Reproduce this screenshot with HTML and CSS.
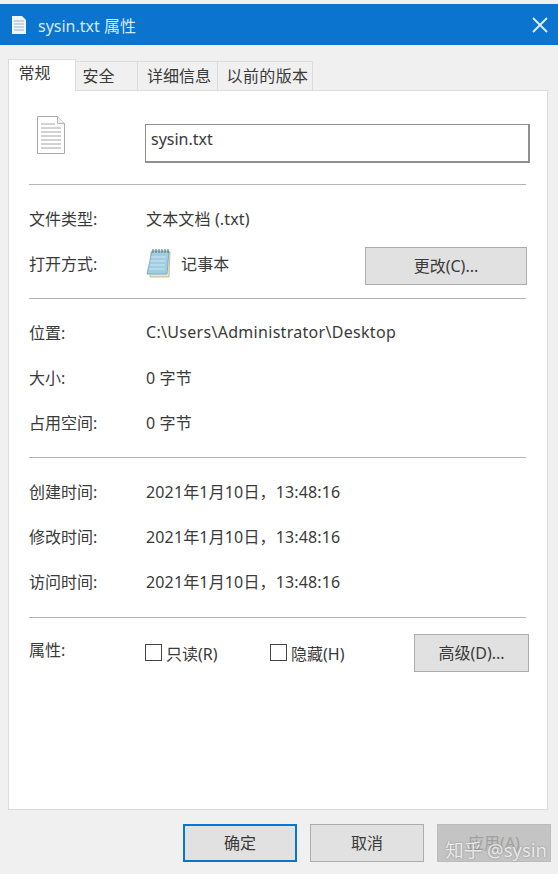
FILE: index.html
```html
<!DOCTYPE html>
<html lang="en">
<head>
    <meta charset="UTF-8">
    <meta name="viewport" content="width=device-width, initial-scale=1.0">
    <title>sysin.txt 属性</title>
    <link rel="stylesheet" href="styles.css">
</head>
<body>
    <div class="window">
        <div class="titlebar">
            <svg class="title-icon" width="16" height="20" viewBox="0 0 16 20">
                <path d="M1 1h10l4 4v14H1z" fill="#eef5fb"/>
                <path d="M3 6h10M3 9h10M3 12h10M3 15h10" stroke="#9fb4c6" stroke-width="1"/>
            </svg>
            <span class="title-text">sysin.txt 属性</span>
            <svg class="title-close" width="16" height="16" viewBox="0 0 16 16">
                <path d="M1 1l14 14M15 1L1 15" stroke="#e3f0fa" stroke-width="1.8" fill="none"/>
            </svg>
        </div>

        <div class="tabs">
            <div class="tab tab-active">常规</div>
            <div class="tab tab-safe">安全</div>
            <div class="tab tab-detail">详细信息</div>
            <div class="tab tab-old">以前的版本</div>
        </div>

        <div class="panel">
            <div class="file-head">
                <svg class="file-icon" width="30" height="40" viewBox="0 0 30 40">
                    <path d="M1.5 1.5h20l7 7v30h-27z" fill="#fff" stroke="#a9a9a9"/>
                    <path d="M21.5 1.5v7h7" fill="#eee" stroke="#b5b5b5"/>
                    <path d="M5 9h14M5 13h20M5 17h20M5 21h20M5 25h20M5 29h20M5 33h20" stroke="#a6a6a6" stroke-width="1"/>
                </svg>
                <div class="name-box">sysin.txt</div>
            </div>

            <div class="section">
                <div class="row">
                    <div class="label">文件类型:</div>
                    <div class="value">文本文档 (.txt)</div>
                </div>
                <div class="row">
                    <div class="label">打开方式:</div>
                    <div class="value opens">
                        <svg class="note-icon" width="26" height="30" viewBox="0 0 26 30">
                            <path d="M5 4h19l-1 25H4z" fill="#e9e2cf" stroke="#b9ae92" stroke-width="0.8"/>
                            <path d="M6 3h17l-2 23H1z" fill="#9fcde2" stroke="#6fa6c0" stroke-width="0.8"/>
                            <path d="M5 9h15M4.500 13h15M4 17h15M3.500 21h15" stroke="#cfe6f0" stroke-width="1"/>
                            <path d="M7 1v4M10 1v4M13 1v4M16 1v4M19 1v4M22 1v4" stroke="#5f7079" stroke-width="1"/>
                        </svg>
                        <span>记事本</span>
                    </div>
                    <div class="btn btn-change">更改(C)...</div>
                </div>
            </div>

            <div class="section">
                <div class="row">
                    <div class="label">位置:</div>
                    <div class="value path">C:\Users\Administrator\Desktop</div>
                </div>
                <div class="row">
                    <div class="label">大小:</div>
                    <div class="value">0 字节</div>
                </div>
                <div class="row">
                    <div class="label">占用空间:</div>
                    <div class="value">0 字节</div>
                </div>
            </div>

            <div class="section">
                <div class="row">
                    <div class="label">创建时间:</div>
                    <div class="value">2021年1月10日，13:48:16</div>
                </div>
                <div class="row">
                    <div class="label">修改时间:</div>
                    <div class="value">2021年1月10日，13:48:16</div>
                </div>
                <div class="row">
                    <div class="label">访问时间:</div>
                    <div class="value">2021年1月10日，13:48:16</div>
                </div>
            </div>

            <div class="attrs">
                <div class="label attr-label">属性:</div>
                <label class="check check-read"><span class="box"></span>只读(R)</label>
                <label class="check check-hide"><span class="box"></span>隐藏(H)</label>
                <div class="btn btn-adv">高级(D)...</div>
            </div>
        </div>

        <div class="footer">
            <div class="btn btn-foot btn-ok">确定</div>
            <div class="btn btn-foot">取消</div>
            <div class="btn btn-foot btn-off">应用(A)</div>
        </div>

        <!-- watermark sits on top of the apply button -->
        <div class="watermark">知乎 @sysin</div>
    </div>
</body>
</html>
```

FILE: styles.css
```css
/* General styles */
html, body {
    margin: 0;
    padding: 0;
}

body {
    width: 558px;
    height: 874px;
    overflow: hidden;
    background: #f3f3f3;
    font-family: "Noto Sans", "Noto Sans CJK SC", sans-serif;
    font-size: 16px;
    color: #3a3a3a;
}

.window {
    position: relative;
    height: 870px;
    padding-top: 4px;
    background: #f0f0f0;
}

/* Title bar */
.titlebar {
    display: flex;
    align-items: center;
    height: 41px;
    padding: 0 10px 0 11px;
    background: #0a74cf;
    color: #d6e8f7;
}

.title-icon {
    margin-right: 11px;
}

.title-text {
    flex: 1;
}

/* Tabs */
.tabs {
    display: flex;
    align-items: flex-end;
    height: 45px;
    padding-left: 8px;
}

.tab {
    box-sizing: border-box;
    height: 29px;
    line-height: 28px;
    text-align: center;
    background: #f0f0f0;
    border: 1px solid #dcdcdc;
    border-bottom: none;
    border-left: none;
}

.tab-active {
    position: relative;
    z-index: 1;
    width: 68px;
    height: 32px;
    margin-bottom: -1px;
    padding-right: 15px;
    line-height: 26px;
    background: #fff;
    border-left: 1px solid #dcdcdc;
}

.tab-safe {
    width: 62px;
    padding-right: 16px;
}

.tab-detail {
    width: 80px;
    padding-left: 3px;
}

.tab-old {
    width: 95px;
    padding-left: 5px;
    letter-spacing: 0.400px;
}

/* Main panel */
.panel {
    box-sizing: border-box;
    width: 540px;
    height: 720px;
    margin-left: 8px;
    padding: 0 21px 0 20px;
    background: #fff;
    border: 1px solid #dcdcdc;
}

.file-head {
    display: flex;
    align-items: flex-start;
    height: 93px;
}

.file-icon {
    flex-shrink: 0;
    margin: 24px 0 0 7px;
}

.name-box {
    box-sizing: border-box;
    flex-shrink: 0;
    width: 385px;
    height: 39px;
    margin: 33px 0 0 79px;
    padding: 3px 5px 0;
    background: #fff;
    border: 2px solid #8f8f8f;
    border-width: 1px 2px 2px 1px;
}

.section {
    padding: 10px 0 12.500px;
    border-top: 1px solid #b4b4b4;
}

.row {
    display: flex;
    align-items: center;
    height: 45.250px;
}

.label {
    width: 116px;
    flex-shrink: 0;
}

.value {
    flex: 1;
    padding-left: 1px;
    letter-spacing: 0.150px;
}

.path {
    letter-spacing: 0.300px;
}

.opens {
    display: flex;
    align-items: center;
}

.note-icon {
    margin-right: 9px;
}

/* Buttons */
.btn {
    box-sizing: border-box;
    height: 38px;
    line-height: 36px;
    text-align: center;
    background: #e1e1e1;
    border: 1px solid #adadad;
}

.btn-change {
    width: 162px;
    margin: 6px -1px 0 0;
}

/* Attributes row */
.attrs {
    display: flex;
    align-items: center;
    height: 72px;
    border-top: 1px solid #b4b4b4;
}

.attr-label {
    margin-top: -9px;
}

.check {
    display: flex;
    align-items: center;
    margin-top: -2px;
}

.check-read {
    width: 125px;
}

.check-hide {
    width: 144px;
}

.box {
    box-sizing: border-box;
    width: 17px;
    height: 17px;
    margin-right: 4px;
    background: #fff;
    border: 1px solid #444;
}

.btn-adv {
    width: 115px;
    flex-shrink: 0;
    margin-top: -1px;
    margin-right: -3px;
}

/* Footer buttons */
.footer {
    display: flex;
    justify-content: flex-end;
    gap: 13px;
    padding: 14px 7px 0 0;
}

.btn-foot {
    width: 114px;
}

.btn-ok {
    line-height: 34px;
    border: 2px solid #0a74cf;
}

.btn-off {
    color: #a0a0a0;
    background: #c4c4c4;
    border-color: #bcbcbc;
}

/* Watermark */
.watermark {
    position: absolute;
    right: 11px;
    bottom: 12px;
    font-size: 18.500px;
    color: rgba(255, 255, 255, 0.8);
    text-shadow: 0 0 2px rgba(90, 90, 90, 0.6);
}
```
